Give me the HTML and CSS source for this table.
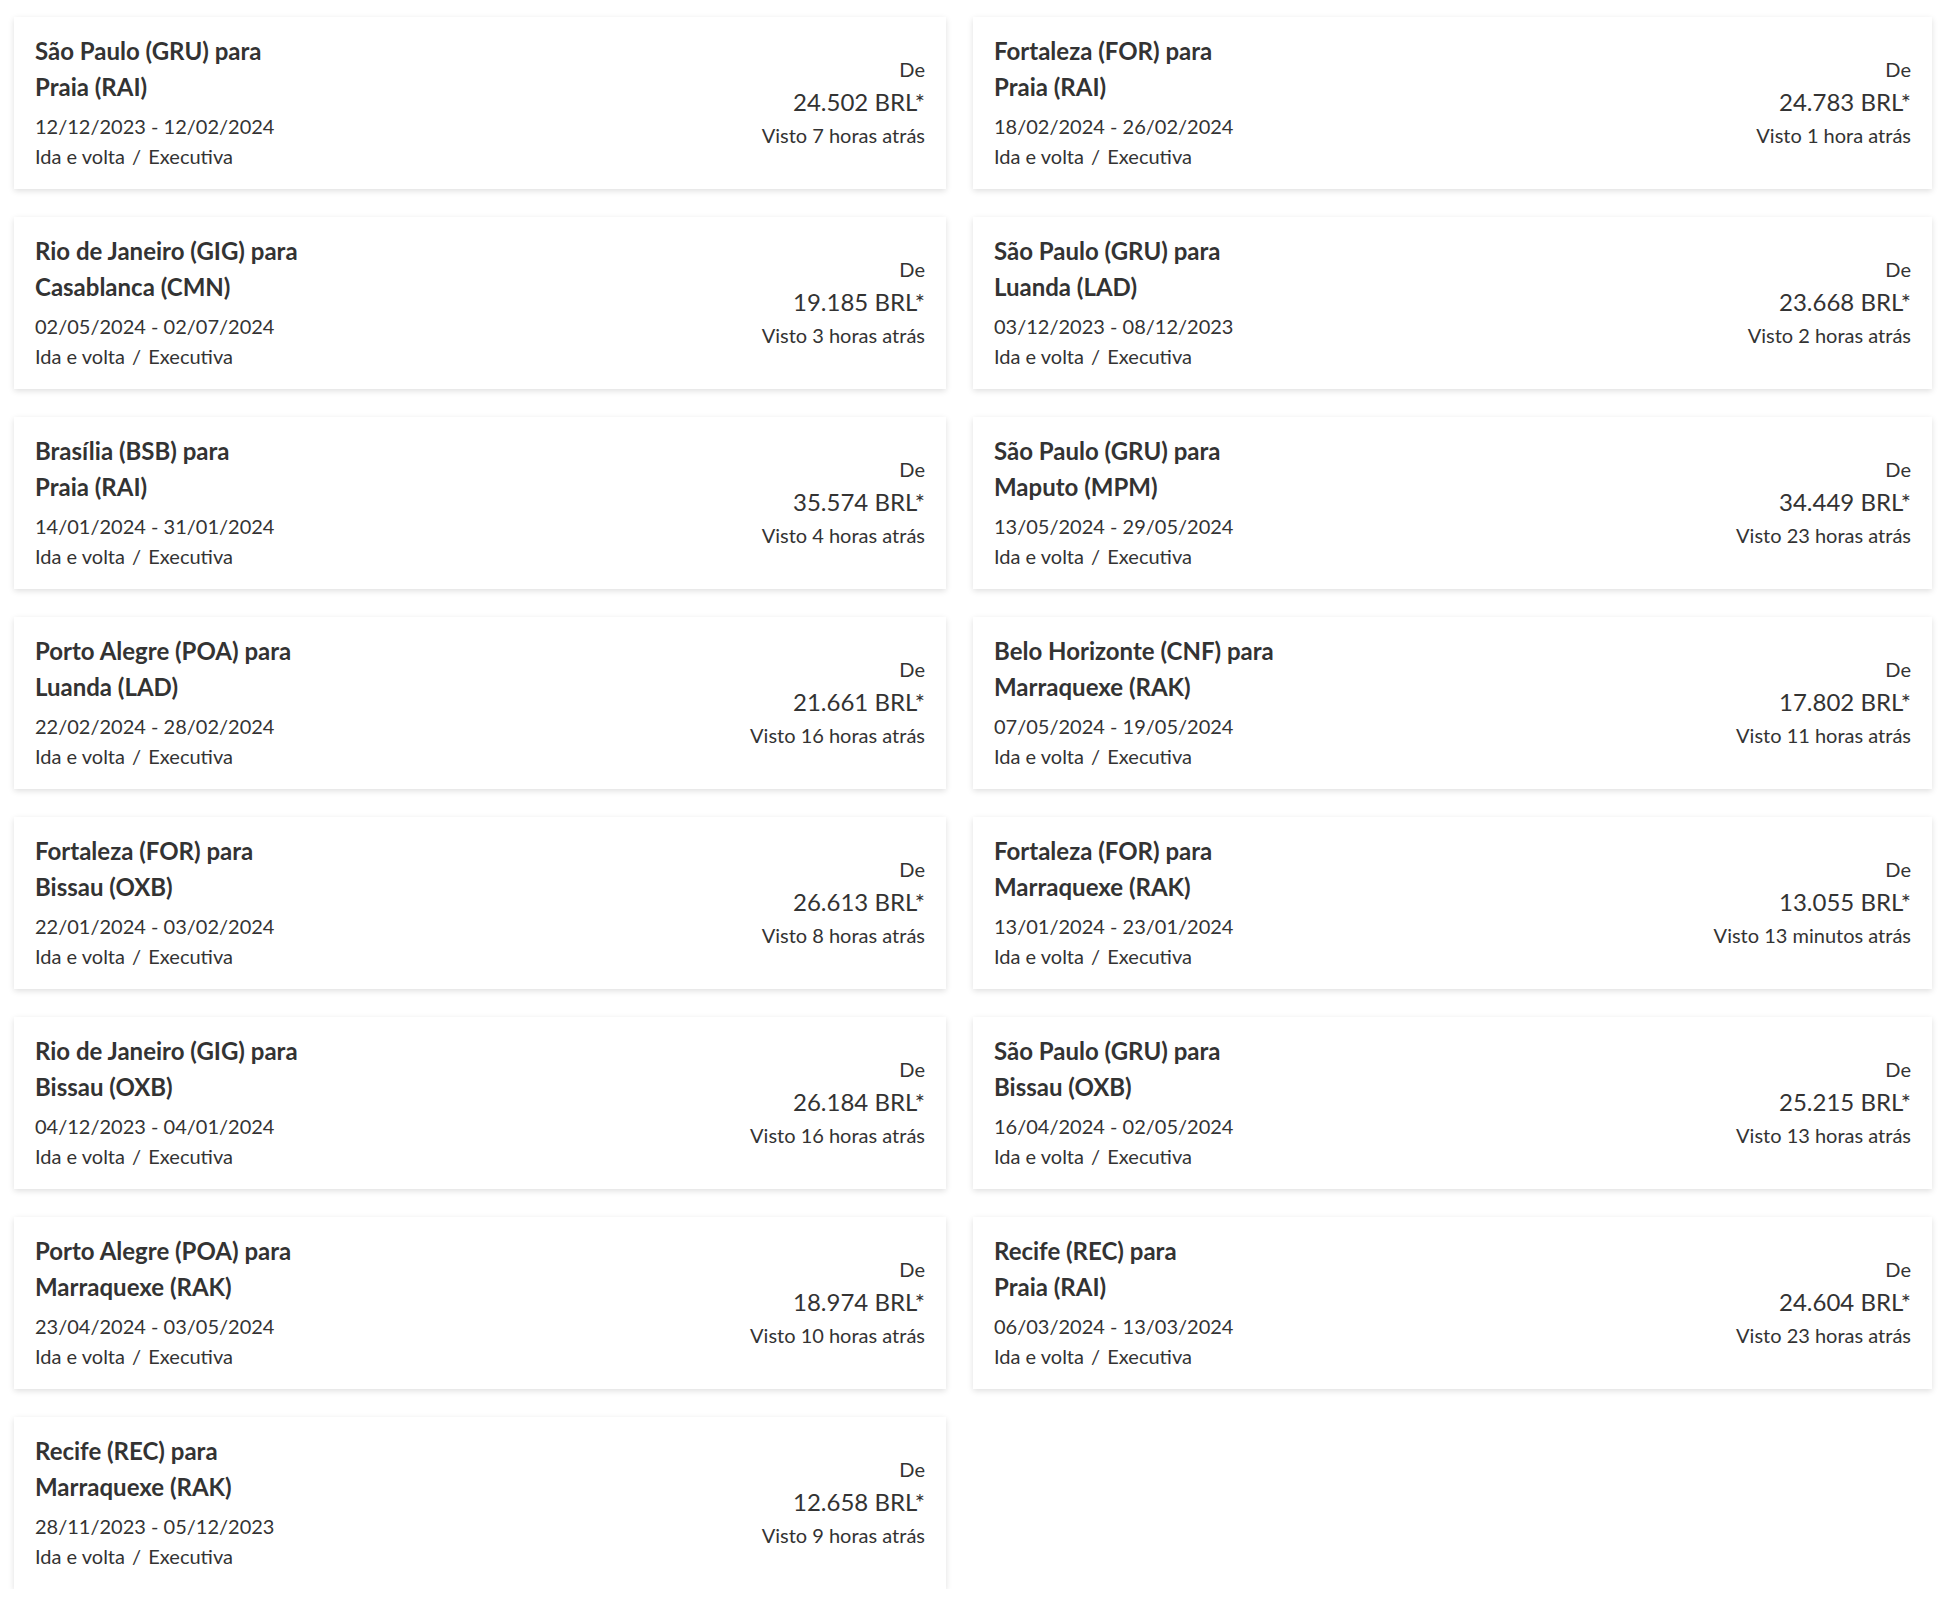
FILE: index.html
```html
<!DOCTYPE html>
<html lang="pt-BR">
<head>
<meta charset="utf-8">
<title>Voos</title>
<link rel="stylesheet" href="styles.css">
</head>
<body>
<div class="grid">
  <div class="card"><div class="info"><div class="title"><div>São Paulo (GRU) para</div><div>Praia (RAI)</div></div><div class="dates">12/12/2023 - 12/02/2024</div><div class="type">Ida e volta <span class="sep">/</span> Executiva</div></div><div class="price"><div class="from">De</div><div class="amount">24.502 BRL*</div><div class="seen">Visto 7 horas atrás</div></div></div>
  <div class="card"><div class="info"><div class="title"><div>Fortaleza (FOR) para</div><div>Praia (RAI)</div></div><div class="dates">18/02/2024 - 26/02/2024</div><div class="type">Ida e volta <span class="sep">/</span> Executiva</div></div><div class="price"><div class="from">De</div><div class="amount">24.783 BRL*</div><div class="seen">Visto 1 hora atrás</div></div></div>
  <div class="card"><div class="info"><div class="title"><div>Rio de Janeiro (GIG) para</div><div>Casablanca (CMN)</div></div><div class="dates">02/05/2024 - 02/07/2024</div><div class="type">Ida e volta <span class="sep">/</span> Executiva</div></div><div class="price"><div class="from">De</div><div class="amount">19.185 BRL*</div><div class="seen">Visto 3 horas atrás</div></div></div>
  <div class="card"><div class="info"><div class="title"><div>São Paulo (GRU) para</div><div>Luanda (LAD)</div></div><div class="dates">03/12/2023 - 08/12/2023</div><div class="type">Ida e volta <span class="sep">/</span> Executiva</div></div><div class="price"><div class="from">De</div><div class="amount">23.668 BRL*</div><div class="seen">Visto 2 horas atrás</div></div></div>
  <div class="card"><div class="info"><div class="title"><div>Brasília (BSB) para</div><div>Praia (RAI)</div></div><div class="dates">14/01/2024 - 31/01/2024</div><div class="type">Ida e volta <span class="sep">/</span> Executiva</div></div><div class="price"><div class="from">De</div><div class="amount">35.574 BRL*</div><div class="seen">Visto 4 horas atrás</div></div></div>
  <div class="card"><div class="info"><div class="title"><div>São Paulo (GRU) para</div><div>Maputo (MPM)</div></div><div class="dates">13/05/2024 - 29/05/2024</div><div class="type">Ida e volta <span class="sep">/</span> Executiva</div></div><div class="price"><div class="from">De</div><div class="amount">34.449 BRL*</div><div class="seen">Visto 23 horas atrás</div></div></div>
  <div class="card"><div class="info"><div class="title"><div>Porto Alegre (POA) para</div><div>Luanda (LAD)</div></div><div class="dates">22/02/2024 - 28/02/2024</div><div class="type">Ida e volta <span class="sep">/</span> Executiva</div></div><div class="price"><div class="from">De</div><div class="amount">21.661 BRL*</div><div class="seen">Visto 16 horas atrás</div></div></div>
  <div class="card"><div class="info"><div class="title"><div>Belo Horizonte (CNF) para</div><div>Marraquexe (RAK)</div></div><div class="dates">07/05/2024 - 19/05/2024</div><div class="type">Ida e volta <span class="sep">/</span> Executiva</div></div><div class="price"><div class="from">De</div><div class="amount">17.802 BRL*</div><div class="seen">Visto 11 horas atrás</div></div></div>
  <div class="card"><div class="info"><div class="title"><div>Fortaleza (FOR) para</div><div>Bissau (OXB)</div></div><div class="dates">22/01/2024 - 03/02/2024</div><div class="type">Ida e volta <span class="sep">/</span> Executiva</div></div><div class="price"><div class="from">De</div><div class="amount">26.613 BRL*</div><div class="seen">Visto 8 horas atrás</div></div></div>
  <div class="card"><div class="info"><div class="title"><div>Fortaleza (FOR) para</div><div>Marraquexe (RAK)</div></div><div class="dates">13/01/2024 - 23/01/2024</div><div class="type">Ida e volta <span class="sep">/</span> Executiva</div></div><div class="price"><div class="from">De</div><div class="amount">13.055 BRL*</div><div class="seen">Visto 13 minutos atrás</div></div></div>
  <div class="card"><div class="info"><div class="title"><div>Rio de Janeiro (GIG) para</div><div>Bissau (OXB)</div></div><div class="dates">04/12/2023 - 04/01/2024</div><div class="type">Ida e volta <span class="sep">/</span> Executiva</div></div><div class="price"><div class="from">De</div><div class="amount">26.184 BRL*</div><div class="seen">Visto 16 horas atrás</div></div></div>
  <div class="card"><div class="info"><div class="title"><div>São Paulo (GRU) para</div><div>Bissau (OXB)</div></div><div class="dates">16/04/2024 - 02/05/2024</div><div class="type">Ida e volta <span class="sep">/</span> Executiva</div></div><div class="price"><div class="from">De</div><div class="amount">25.215 BRL*</div><div class="seen">Visto 13 horas atrás</div></div></div>
  <div class="card"><div class="info"><div class="title"><div>Porto Alegre (POA) para</div><div>Marraquexe (RAK)</div></div><div class="dates">23/04/2024 - 03/05/2024</div><div class="type">Ida e volta <span class="sep">/</span> Executiva</div></div><div class="price"><div class="from">De</div><div class="amount">18.974 BRL*</div><div class="seen">Visto 10 horas atrás</div></div></div>
  <div class="card"><div class="info"><div class="title"><div>Recife (REC) para</div><div>Praia (RAI)</div></div><div class="dates">06/03/2024 - 13/03/2024</div><div class="type">Ida e volta <span class="sep">/</span> Executiva</div></div><div class="price"><div class="from">De</div><div class="amount">24.604 BRL*</div><div class="seen">Visto 23 horas atrás</div></div></div>
  <div class="card"><div class="info"><div class="title"><div>Recife (REC) para</div><div>Marraquexe (RAK)</div></div><div class="dates">28/11/2023 - 05/12/2023</div><div class="type">Ida e volta <span class="sep">/</span> Executiva</div></div><div class="price"><div class="from">De</div><div class="amount">12.658 BRL*</div><div class="seen">Visto 9 horas atrás</div></div></div>
</div>
</body>
</html>
```
FILE: styles.css
```css
html, body {
  margin: 0;
  padding: 0;
  background: #ffffff;
}
body {
  font-family: Lato, "Open Sans", sans-serif;
  color: #333333;
  padding: 17px 12px 0 14px;
}
.grid {
  display: grid;
  grid-template-columns: 932px 959px;
  column-gap: 27px;
  row-gap: 28px;
}
.card {
  height: 172px;
  box-sizing: border-box;
  background: #ffffff;
  box-shadow: 0 2px 6px rgba(0, 0, 0, 0.13);
  padding: 16px 21px 0 21px;
  display: flex;
  justify-content: space-between;
  align-items: flex-start;
}
.title {
  font-weight: 700;
  font-size: 24px;
  line-height: 36px;
}
.dates {
  font-size: 20px;
  line-height: 30px;
  margin-top: 6px;
}
.type {
  font-size: 20px;
  line-height: 30px;
}
.sep {
  margin: 0 2px;
}
.price {
  align-self: center;
  margin-top: -18px;
  text-align: right;
}
.from {
  font-size: 20px;
  line-height: 30px;
}
.amount {
  font-size: 24px;
  line-height: 36px;
}
.seen {
  font-size: 20px;
  line-height: 30px;
}
```
